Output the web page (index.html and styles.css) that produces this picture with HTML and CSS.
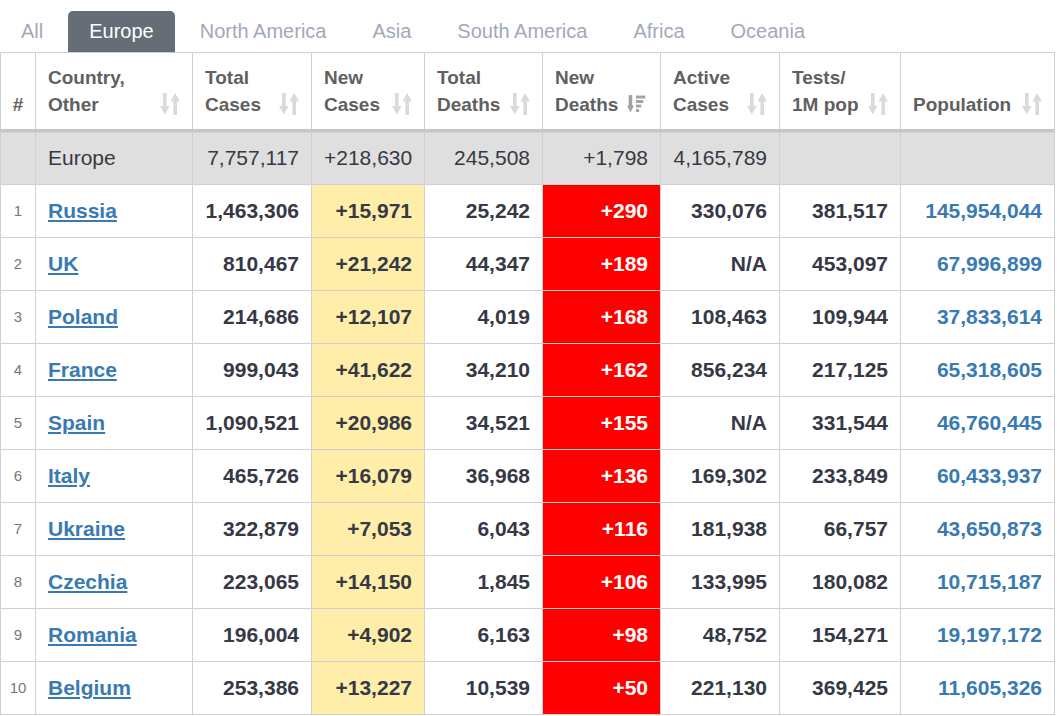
FILE: index.html
```html
<!DOCTYPE html>
<html>
<head>
<meta charset="utf-8">
<link rel="stylesheet" href="styles.css">
</head>
<body>
<div class="page">
  <ul class="tabs">
    <li class="tab">All</li>
    <li class="tab active">Europe</li>
    <li class="tab">North America</li>
    <li class="tab">Asia</li>
    <li class="tab">South America</li>
    <li class="tab">Africa</li>
    <li class="tab">Oceania</li>
  </ul>
  <table class="stats">
    <colgroup>
      <col class="c-num"><col class="c-country"><col class="c-total"><col class="c-new"><col class="c-deaths"><col class="c-newd"><col class="c-active"><col class="c-tests"><col class="c-pop">
    </colgroup>
    <thead>
      <tr>
        <th class="h-num">#</th>
        <th><div class="hd"><span>Country,<br>Other</span><svg class="sort" viewBox="0 0 20 22" width="20" height="22"><rect x="3" y="0" width="3.6" height="14"/><polygon points="0,13 9.6,13 4.8,21.5"/><polygon points="10.4,8.5 20,8.5 15.2,0"/><rect x="13.4" y="8" width="3.6" height="14"/></svg></div></th>
        <th><div class="hd"><span>Total<br>Cases</span><svg class="sort" viewBox="0 0 20 22" width="20" height="22"><rect x="3" y="0" width="3.6" height="14"/><polygon points="0,13 9.6,13 4.8,21.5"/><polygon points="10.4,8.5 20,8.5 15.2,0"/><rect x="13.4" y="8" width="3.6" height="14"/></svg></div></th>
        <th><div class="hd"><span>New<br>Cases</span><svg class="sort" viewBox="0 0 20 22" width="20" height="22"><rect x="3" y="0" width="3.6" height="14"/><polygon points="0,13 9.6,13 4.8,21.5"/><polygon points="10.4,8.5 20,8.5 15.2,0"/><rect x="13.4" y="8" width="3.6" height="14"/></svg></div></th>
        <th><div class="hd"><span>Total<br>Deaths</span><svg class="sort" viewBox="0 0 20 22" width="20" height="22"><rect x="3" y="0" width="3.6" height="14"/><polygon points="0,13 9.6,13 4.8,21.5"/><polygon points="10.4,8.5 20,8.5 15.2,0"/><rect x="13.4" y="8" width="3.6" height="14"/></svg></div></th>
        <th><div class="hd"><span>New<br>Deaths</span><svg class="sort active-sort" viewBox="0 0 20 18" width="21" height="19"><rect x="1.6" y="0" width="3.4" height="11"/><polygon points="0,10 6.6,10 3.3,16.5"/><rect x="8.5" y="0.5" width="9" height="2.8"/><rect x="8.5" y="4.8" width="7" height="2.8"/><rect x="8.5" y="9.1" width="5" height="2.8"/><rect x="8.5" y="13.4" width="3" height="2.8"/></svg></div></th>
        <th><div class="hd"><span>Active<br>Cases</span><svg class="sort" viewBox="0 0 20 22" width="20" height="22"><rect x="3" y="0" width="3.6" height="14"/><polygon points="0,13 9.6,13 4.8,21.5"/><polygon points="10.4,8.5 20,8.5 15.2,0"/><rect x="13.4" y="8" width="3.6" height="14"/></svg></div></th>
        <th><div class="hd"><span>Tests/<br>1M pop</span><svg class="sort" viewBox="0 0 20 22" width="20" height="22"><rect x="3" y="0" width="3.6" height="14"/><polygon points="0,13 9.6,13 4.8,21.5"/><polygon points="10.4,8.5 20,8.5 15.2,0"/><rect x="13.4" y="8" width="3.6" height="14"/></svg></div></th>
        <th><div class="hd"><span>Population</span><svg class="sort" viewBox="0 0 20 22" width="20" height="22"><rect x="3" y="0" width="3.6" height="14"/><polygon points="0,13 9.6,13 4.8,21.5"/><polygon points="10.4,8.5 20,8.5 15.2,0"/><rect x="13.4" y="8" width="3.6" height="14"/></svg></div></th>
      </tr>
    </thead>
    <tbody>
      <tr class="total-row">
        <td></td><td class="left">Europe</td><td>7,757,117</td><td>+218,630</td><td>245,508</td><td>+1,798</td><td>4,165,789</td><td></td><td></td>
      </tr>
      <tr><td class="rank">1</td><td class="left"><a class="country">Russia</a></td><td>1,463,306</td><td class="newc">+15,971</td><td>25,242</td><td class="newd">+290</td><td>330,076</td><td>381,517</td><td class="pop">145,954,044</td></tr>
      <tr><td class="rank">2</td><td class="left"><a class="country">UK</a></td><td>810,467</td><td class="newc">+21,242</td><td>44,347</td><td class="newd">+189</td><td>N/A</td><td>453,097</td><td class="pop">67,996,899</td></tr>
      <tr><td class="rank">3</td><td class="left"><a class="country">Poland</a></td><td>214,686</td><td class="newc">+12,107</td><td>4,019</td><td class="newd">+168</td><td>108,463</td><td>109,944</td><td class="pop">37,833,614</td></tr>
      <tr><td class="rank">4</td><td class="left"><a class="country">France</a></td><td>999,043</td><td class="newc">+41,622</td><td>34,210</td><td class="newd">+162</td><td>856,234</td><td>217,125</td><td class="pop">65,318,605</td></tr>
      <tr><td class="rank">5</td><td class="left"><a class="country">Spain</a></td><td>1,090,521</td><td class="newc">+20,986</td><td>34,521</td><td class="newd">+155</td><td>N/A</td><td>331,544</td><td class="pop">46,760,445</td></tr>
      <tr><td class="rank">6</td><td class="left"><a class="country">Italy</a></td><td>465,726</td><td class="newc">+16,079</td><td>36,968</td><td class="newd">+136</td><td>169,302</td><td>233,849</td><td class="pop">60,433,937</td></tr>
      <tr><td class="rank">7</td><td class="left"><a class="country">Ukraine</a></td><td>322,879</td><td class="newc">+7,053</td><td>6,043</td><td class="newd">+116</td><td>181,938</td><td>66,757</td><td class="pop">43,650,873</td></tr>
      <tr><td class="rank">8</td><td class="left"><a class="country">Czechia</a></td><td>223,065</td><td class="newc">+14,150</td><td>1,845</td><td class="newd">+106</td><td>133,995</td><td>180,082</td><td class="pop">10,715,187</td></tr>
      <tr><td class="rank">9</td><td class="left"><a class="country">Romania</a></td><td>196,004</td><td class="newc">+4,902</td><td>6,163</td><td class="newd">+98</td><td>48,752</td><td>154,271</td><td class="pop">19,197,172</td></tr>
      <tr><td class="rank">10</td><td class="left"><a class="country">Belgium</a></td><td>253,386</td><td class="newc">+13,227</td><td>10,539</td><td class="newd">+50</td><td>221,130</td><td>369,425</td><td class="pop">11,605,326</td></tr>
    </tbody>
  </table>
</div>
</body>
</html>
```

FILE: styles.css
```css
html, body {
  margin: 0;
  padding: 0;
  background: #ffffff;
}

body {
  font-family: "Liberation Sans", Arial, sans-serif;
  color: #363945;
}

.page {
  width: 1057px;
}

.tabs {
  display: flex;
  gap: 4px;
  list-style: none;
  margin: 11px 0 0 0;
  padding: 0;
}

.tab {
  padding: 0 21px;
  height: 41px;
  line-height: 41px;
  font-size: 20px;
  color: #a2a9b8;
  border-radius: 5px 5px 0 0;
}

.tab.active {
  background: #656e76;
  color: #ffffff;
}

.stats {
  border-collapse: collapse;
  table-layout: fixed;
  width: 1054px;
}

.c-num { width: 35px; }
.c-country { width: 157px; }
.c-total { width: 119px; }
.c-new { width: 113px; }
.c-deaths { width: 118px; }
.c-newd { width: 118px; }
.c-active { width: 119px; }
.c-tests { width: 121px; }
.c-pop { width: 154px; }

.stats th,
.stats td {
  border: 1px solid #d0d0d0;
}

.stats th {
  padding: 11px 12px;
  font-size: 19px;
  line-height: 27px;
  font-weight: bold;
  color: #606060;
  text-align: left;
  vertical-align: bottom;
  background: #ffffff;
  border-bottom: 3px solid #c6c6c6;
}

.stats th.h-num {
  padding: 11px 0;
  text-align: center;
}

.hd {
  display: flex;
  justify-content: space-between;
  align-items: flex-end;
}

.sort {
  fill: #dadada;
  flex: none;
  margin-bottom: 3px;
}

.sort.active-sort {
  fill: #a3a3a3;
  margin-bottom: 4px;
}

.stats td {
  padding: 14px 12px;
  height: 24px;
  font-size: 21px;
  line-height: 24px;
  font-weight: bold;
  text-align: right;
  color: #363945;
  white-space: nowrap;
}

.stats td.left {
  text-align: left;
}

.total-row td {
  background: #dfdfdf;
  font-weight: normal;
  box-shadow: inset 0 2px 2px -2px rgba(0, 0, 0, 0.2);
}

.stats td.rank {
  padding: 14px 0;
  text-align: center;
  font-size: 15px;
  font-weight: normal;
  color: #777777;
}

.country {
  color: #3a7ab3;
  text-decoration: underline;
  text-underline-offset: 2px;
}

.stats td.newc {
  background: #ffeeaa;
}

.stats td.newd {
  background: #ff0000;
  color: #ffffff;
}

.stats td.pop {
  color: #3a7ab3;
}
```
